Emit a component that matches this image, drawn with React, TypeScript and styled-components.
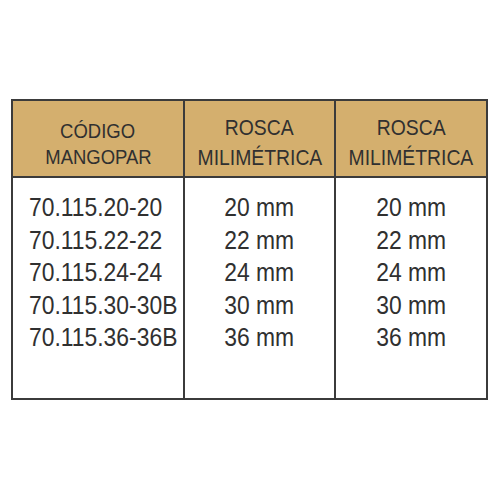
import React from "react";
import styled, { createGlobalStyle } from "styled-components";

const Global = createGlobalStyle`
  html, body { margin: 0; padding: 0; background: #ffffff; }
  body { font-family: "Liberation Sans", Arial, sans-serif; }
`;

const Page = styled.div`
  width: 501px;
  height: 501px;
  padding: 99px 0 0 11px;
  box-sizing: border-box;
  background: #ffffff;
`;

const Table = styled.div`
  display: grid;
  grid-template-columns: 170px 149px 150px;
  grid-template-rows: 75px 220px;
  gap: 2px;
  padding: 2px;
  width: 477px;
  box-sizing: border-box;
  background: #3b3b3b;
`;

const HeadCell = styled.div<{ $size: number; $lh: number; $top: number }>`
  background: #d4af6e;
  color: #303030;
  font-size: ${(p) => p.$size}px;
  line-height: ${(p) => p.$lh}px;
  padding-top: ${(p) => p.$top}px;
  box-sizing: border-box;
  display: flex;
  flex-direction: column;
  align-items: center;
  overflow: hidden;
`;

const HeadLine = styled.span`
  display: block;
  white-space: nowrap;
  transform: scaleX(0.88);
  transform-origin: center;
`;

const BodyCell = styled.div<{ $align: "left" | "center" }>`
  background: #ffffff;
  color: #303030;
  font-size: 25px;
  line-height: 32.5px;
  padding: 13px ${(p) => (p.$align === "left" ? "0 0 16px" : "0 0 0")};
  box-sizing: border-box;
  display: flex;
  flex-direction: column;
  align-items: ${(p) => (p.$align === "left" ? "flex-start" : "center")};
  overflow: hidden;
`;

const BodyLine = styled.span<{ $align: "left" | "center" }>`
  display: block;
  white-space: nowrap;
  transform: scaleX(0.915);
  transform-origin: ${(p) => (p.$align === "left" ? "left" : "center")};
`;

const codes = [
  "70.115.20-20",
  "70.115.22-22",
  "70.115.24-24",
  "70.115.30-30B",
  "70.115.36-36B",
];
const sizes = ["20 mm", "22 mm", "24 mm", "30 mm", "36 mm"];

export default function App() {
  return (
    <>
      <Global />
      <Page>
        <Table>
          <HeadCell $size={21} $lh={26} $top={17}>
            <HeadLine>CÓDIGO</HeadLine>
            <HeadLine>MANGOPAR</HeadLine>
          </HeadCell>
          <HeadCell $size={22} $lh={30} $top={12}>
            <HeadLine>ROSCA</HeadLine>
            <HeadLine>MILIMÉTRICA</HeadLine>
          </HeadCell>
          <HeadCell $size={22} $lh={30} $top={12}>
            <HeadLine>ROSCA</HeadLine>
            <HeadLine>MILIMÉTRICA</HeadLine>
          </HeadCell>
          <BodyCell $align="left">
            {codes.map((c) => (
              <BodyLine key={c} $align="left">
                {c}
              </BodyLine>
            ))}
          </BodyCell>
          <BodyCell $align="center">
            {sizes.map((s) => (
              <BodyLine key={s} $align="center">
                {s}
              </BodyLine>
            ))}
          </BodyCell>
          <BodyCell $align="center">
            {sizes.map((s) => (
              <BodyLine key={s} $align="center">
                {s}
              </BodyLine>
            ))}
          </BodyCell>
        </Table>
      </Page>
    </>
  );
}
